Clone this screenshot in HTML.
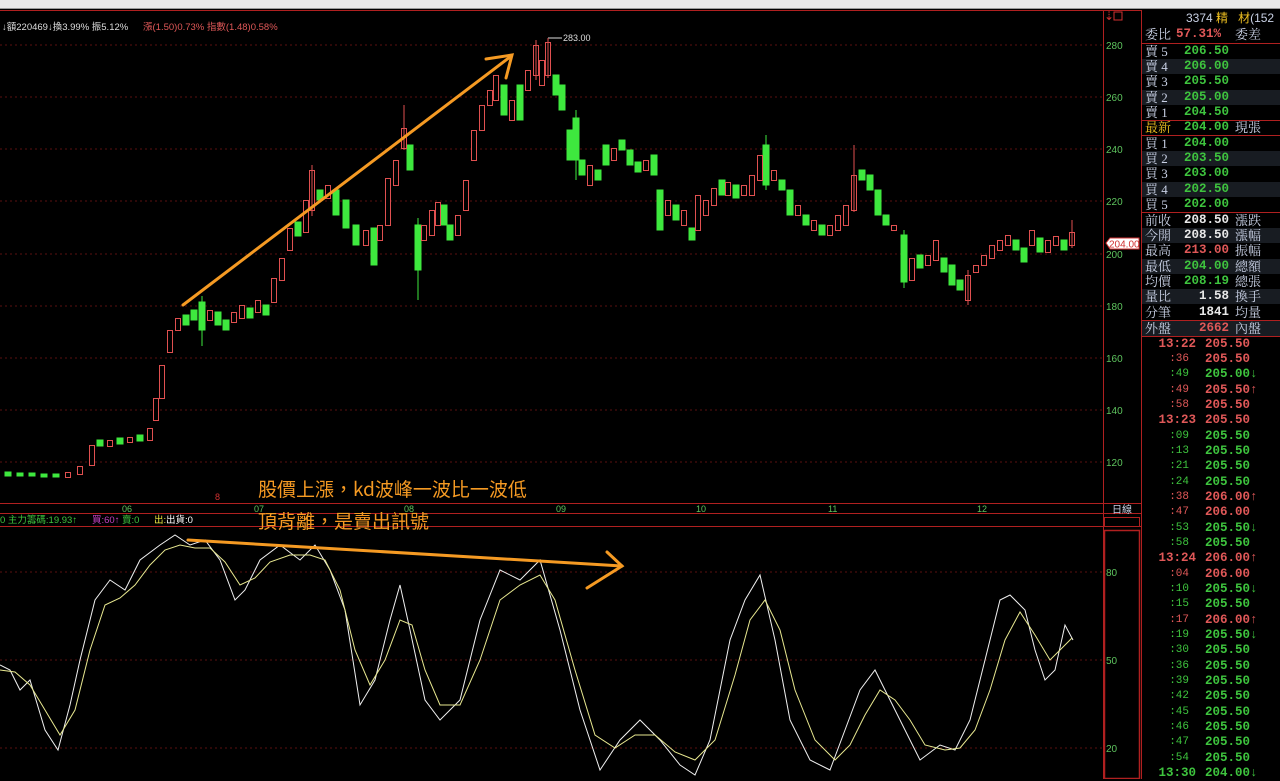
<!DOCTYPE html>
<html><head><meta charset="utf-8">
<style>
*{margin:0;padding:0;box-sizing:border-box}
body{width:1280px;height:779px;background:#000;overflow:hidden;position:relative;font-family:"Liberation Sans","Noto Sans CJK TC",sans-serif}
#topbar{position:absolute;left:0;top:0;width:1280px;height:9px;background:#e8e8e8;border-bottom:1px solid #999}
svg{position:absolute;left:0;top:0}
#panel{position:absolute;left:1141px;top:10px;width:139px;height:769px;background:#000;border-left:1px solid #b02020;font-family:"Liberation Serif","Noto Serif CJK SC","Noto Sans CJK TC",serif}
.r{position:absolute;left:0;width:139px;height:15.3px;font-size:13px;line-height:15px;color:#c8d0e4}
.r.alt{background:#181c22}
.r .l{position:absolute;left:3px}
.r .v{position:absolute;right:52px;font-family:"Liberation Mono",monospace;font-weight:bold;font-size:12.5px}
.r .e{position:absolute;left:93px}
.t{position:absolute;left:0;width:139px;height:15.3px;font-family:"Liberation Mono",monospace;font-size:12.5px;line-height:15px;font-weight:bold}
.t .tm{position:absolute;right:92px;font-weight:normal;font-size:11px}
.t .tm.big{font-weight:bold;font-size:12.5px;right:85px}
.t .p{position:absolute;left:63px}
.g{color:#3ec43e}.rd{color:#e05858}.w{color:#e8e8e8}.y{color:#f0c020}
.hl{position:absolute;left:0;width:139px;height:1px;background:#b02020}
</style></head><body>
<div id="topbar"></div>
<svg width="1280" height="779" viewBox="0 0 1280 779">
<g stroke="#5a1010" stroke-dasharray="2,3" stroke-width="1">
<line x1="0" y1="45" x2="1103" y2="45"/><line x1="0" y1="97" x2="1103" y2="97"/><line x1="0" y1="149" x2="1103" y2="149"/><line x1="0" y1="201" x2="1103" y2="201"/><line x1="0" y1="254" x2="1103" y2="254"/><line x1="0" y1="306" x2="1103" y2="306"/><line x1="0" y1="358" x2="1103" y2="358"/><line x1="0" y1="410" x2="1103" y2="410"/><line x1="0" y1="462" x2="1103" y2="462"/>
<line x1="0" y1="572" x2="1103" y2="572"/><line x1="0" y1="660" x2="1103" y2="660"/><line x1="0" y1="748" x2="1103" y2="748"/>
</g>
<g stroke="#b02020" stroke-width="1" fill="none">
<line x1="0" y1="10.5" x2="1141" y2="10.5"/>
<line x1="1103.5" y1="10" x2="1103.5" y2="779"/>
<line x1="0" y1="503.5" x2="1141" y2="503.5"/>
<line x1="0" y1="513.5" x2="1141" y2="513.5"/>
<line x1="0" y1="526.5" x2="1141" y2="526.5"/>
<rect x="1104.5" y="517.5" width="35" height="9"/>
<rect x="1104.5" y="530.5" width="35" height="248" stroke-width="1.5"/>
</g>
<g fill="#5ec45e" font-size="10" font-family="Liberation Sans,sans-serif">
<text x="1106" y="49">280</text><text x="1106" y="101">260</text><text x="1106" y="153">240</text><text x="1106" y="205">220</text><text x="1106" y="258">200</text><text x="1106" y="310">180</text><text x="1106" y="362">160</text><text x="1106" y="414">140</text><text x="1106" y="466">120</text>
<text x="1106" y="576">80</text><text x="1106" y="664">50</text><text x="1106" y="752">20</text>
<text x="122" y="512" font-size="9">06</text><text x="254" y="512" font-size="9">07</text><text x="404" y="512" font-size="9">08</text><text x="556" y="512" font-size="9">09</text><text x="696" y="512" font-size="9">10</text><text x="828" y="512" font-size="9">11</text><text x="977" y="512" font-size="9">12</text>
</g>
<text x="1112" y="513" fill="#c8d0e4" font-size="10" font-family="Noto Sans CJK TC,sans-serif">日線</text>
<path d="M1106 243 L1110 238 L1139 238 L1139 249 L1110 249 Z" fill="#fff" stroke="#d03030"/>
<text x="1109" y="247.5" fill="#d03030" font-size="10" font-family="Liberation Sans,sans-serif">204.00</text>
<text x="1104" y="20" fill="#d03030" font-size="12">⇣</text><rect x="1114" y="12" width="8" height="8" fill="none" stroke="#d03030"/>
<text x="563" y="41" fill="#ddd" font-size="9" font-family="Liberation Sans,sans-serif">283.00</text>
<line x1="548" y1="38" x2="562" y2="38" stroke="#ddd"/>
<text x="215" y="500" fill="#d03030" font-size="9">8</text>
<g font-size="9.5" font-family="Liberation Sans,Noto Sans CJK TC,sans-serif">
<text x="2" y="30" fill="#ddd">↓額220469↓換3.99% 振5.12%</text>
<text x="143" y="30" fill="#e05858">漲(1.50)0.73% 指數(1.48)0.58%</text>
<text x="0" y="523" fill="#3ec43e">0 主力籌碼:19.93↑</text>
<text x="92" y="523" fill="#c040c0">買:60↑</text>
<text x="122" y="523" fill="#3ec43e">賣:0</text>
<text x="154" y="523" fill="#e8e840">出:</text><text x="166" y="523" fill="#fff">出貨:0</text>
</g>
<g id="candles" stroke-width="1">
<g fill="#3ee83e" stroke="#3ee83e">
<rect x="5" y="472" width="6" height="4"/><rect x="17" y="473" width="6" height="3"/><rect x="29" y="473" width="6" height="3"/><rect x="41" y="474" width="6" height="3"/><rect x="53" y="474" width="6" height="3"/>
<rect x="97" y="440" width="6" height="6"/><rect x="117" y="438" width="6" height="6"/><rect x="137" y="435" width="6" height="6"/>
<rect x="183" y="315" width="6" height="10"/><rect x="191" y="310" width="6" height="10"/><rect x="199" y="302" width="6" height="28"/><rect x="215" y="312" width="6" height="13"/><rect x="223" y="320" width="6" height="10"/><rect x="247" y="308" width="6" height="10"/><rect x="263" y="305" width="6" height="10"/>
<rect x="295" y="222" width="6" height="14"/><rect x="317" y="190" width="6" height="10"/><rect x="333" y="190" width="6" height="25"/><rect x="343" y="200" width="6" height="28"/><rect x="353" y="225" width="6" height="20"/><rect x="371" y="228" width="6" height="37"/>
<rect x="407" y="145" width="6" height="25"/><rect x="415" y="225" width="6" height="45"/><rect x="441" y="205" width="6" height="20"/><rect x="447" y="225" width="6" height="15"/>
<rect x="501" y="85" width="6" height="30"/><rect x="517" y="85" width="6" height="35"/><rect x="553" y="75" width="6" height="20"/><rect x="559" y="85" width="6" height="25"/><rect x="567" y="130" width="6" height="30"/><rect x="573" y="118" width="6" height="42"/><rect x="579" y="160" width="6" height="15"/><rect x="595" y="170" width="6" height="10"/><rect x="603" y="145" width="6" height="20"/><rect x="619" y="140" width="6" height="10"/><rect x="627" y="150" width="6" height="15"/><rect x="635" y="162" width="6" height="10"/><rect x="651" y="155" width="6" height="20"/><rect x="657" y="190" width="6" height="40"/><rect x="673" y="205" width="6" height="15"/><rect x="689" y="228" width="6" height="12"/>
<rect x="719" y="180" width="6" height="15"/><rect x="733" y="185" width="6" height="13"/><rect x="763" y="145" width="6" height="40"/><rect x="779" y="180" width="6" height="10"/><rect x="787" y="190" width="6" height="25"/><rect x="803" y="215" width="6" height="10"/><rect x="819" y="225" width="6" height="10"/>
<rect x="859" y="170" width="6" height="10"/><rect x="867" y="175" width="6" height="15"/><rect x="875" y="190" width="6" height="25"/><rect x="883" y="215" width="6" height="10"/><rect x="901" y="235" width="6" height="47"/><rect x="917" y="255" width="6" height="13"/><rect x="941" y="258" width="6" height="14"/><rect x="949" y="265" width="6" height="20"/><rect x="957" y="280" width="6" height="10"/><rect x="1013" y="240" width="6" height="10"/><rect x="1021" y="248" width="6" height="14"/><rect x="1037" y="238" width="6" height="14"/><rect x="1061" y="240" width="6" height="10"/>
</g>
<g fill="#000" stroke="#e05050">
<rect x="65.5" y="472.5" width="5" height="5"/><rect x="77.5" y="466.5" width="5" height="8"/><rect x="89.5" y="445.5" width="5" height="20"/><rect x="107.5" y="440.5" width="5" height="6"/><rect x="127.5" y="437.5" width="5" height="5"/><rect x="147.5" y="428.5" width="5" height="12"/><rect x="153.5" y="398.5" width="5" height="22"/><rect x="159.5" y="365.5" width="5" height="33"/><rect x="167.5" y="330.5" width="5" height="22"/><rect x="175.5" y="318.5" width="5" height="12"/>
<rect x="207.5" y="310.5" width="5" height="10"/><rect x="231.5" y="312.5" width="5" height="10"/><rect x="239.5" y="305.5" width="5" height="13"/><rect x="255.5" y="300.5" width="5" height="12"/><rect x="271.5" y="278.5" width="5" height="24"/><rect x="279.5" y="258.5" width="5" height="22"/><rect x="287.5" y="228.5" width="5" height="22"/><rect x="303.5" y="200.5" width="5" height="32"/><rect x="309.5" y="170.5" width="5" height="40"/><rect x="325.5" y="185.5" width="5" height="13"/><rect x="363.5" y="230.5" width="5" height="15"/><rect x="377.5" y="225.5" width="5" height="15"/><rect x="385.5" y="178.5" width="5" height="47"/><rect x="393.5" y="160.5" width="5" height="25"/><rect x="401.5" y="128.5" width="5" height="20"/>
<rect x="421.5" y="225.5" width="5" height="15"/><rect x="429.5" y="210.5" width="5" height="25"/><rect x="435.5" y="202.5" width="5" height="23"/><rect x="455.5" y="215.5" width="5" height="20"/><rect x="463.5" y="180.5" width="5" height="30"/><rect x="471.5" y="130.5" width="5" height="30"/><rect x="479.5" y="105.5" width="5" height="25"/><rect x="487.5" y="90.5" width="5" height="15"/><rect x="493.5" y="75.5" width="5" height="25"/><rect x="509.5" y="100.5" width="5" height="20"/><rect x="525.5" y="70.5" width="5" height="20"/><rect x="533.5" y="45.5" width="5" height="30"/><rect x="539.5" y="60.5" width="5" height="25"/><rect x="545.5" y="42.5" width="5" height="33"/>
<rect x="587.5" y="165.5" width="5" height="20"/><rect x="611.5" y="148.5" width="5" height="12"/><rect x="643.5" y="160.5" width="5" height="10"/><rect x="665.5" y="200.5" width="5" height="15"/><rect x="681.5" y="210.5" width="5" height="15"/><rect x="695.5" y="195.5" width="5" height="35"/><rect x="703.5" y="200.5" width="5" height="15"/><rect x="711.5" y="188.5" width="5" height="17"/><rect x="725.5" y="182.5" width="5" height="13"/><rect x="741.5" y="185.5" width="5" height="10"/><rect x="749.5" y="175.5" width="5" height="20"/><rect x="757.5" y="155.5" width="5" height="25"/><rect x="771.5" y="170.5" width="5" height="10"/><rect x="795.5" y="205.5" width="5" height="10"/><rect x="811.5" y="220.5" width="5" height="10"/><rect x="827.5" y="225.5" width="5" height="10"/><rect x="835.5" y="215.5" width="5" height="15"/><rect x="843.5" y="205.5" width="5" height="20"/><rect x="851.5" y="175.5" width="5" height="35"/><rect x="891.5" y="225.5" width="5" height="5"/><rect x="909.5" y="258.5" width="5" height="22"/><rect x="925.5" y="255.5" width="5" height="10"/><rect x="933.5" y="240.5" width="5" height="20"/><rect x="965.5" y="275.5" width="5" height="25"/><rect x="973.5" y="265.5" width="5" height="7"/><rect x="981.5" y="255.5" width="5" height="10"/><rect x="989.5" y="245.5" width="5" height="13"/><rect x="997.5" y="240.5" width="5" height="10"/><rect x="1005.5" y="235.5" width="5" height="10"/><rect x="1029.5" y="230.5" width="5" height="15"/><rect x="1045.5" y="240.5" width="5" height="12"/><rect x="1053.5" y="236.5" width="5" height="9"/><rect x="1069.5" y="232.5" width="5" height="13"/>
</g>
<g stroke="#3ee83e"><line x1="202" y1="296" x2="202" y2="346"/><line x1="418" y1="218" x2="418" y2="300"/><line x1="766" y1="135" x2="766" y2="190"/><line x1="904" y1="230" x2="904" y2="288"/><line x1="576" y1="110" x2="576" y2="180"/></g>
<g stroke="#e05050"><line x1="312" y1="165" x2="312" y2="216"/><line x1="404" y1="105" x2="404" y2="150"/><line x1="548" y1="38" x2="548" y2="78"/><line x1="536" y1="40" x2="536" y2="80"/><line x1="854" y1="145" x2="854" y2="212"/><line x1="1072" y1="220" x2="1072" y2="248"/><line x1="968" y1="270" x2="968" y2="305"/></g>
</g>
<polyline fill="none" stroke="#f0f0f0" stroke-width="1" points="0,665 10,670 20,690 30,680 45,730 58,750 70,705 80,660 95,600 110,580 125,590 140,560 160,545 175,535 190,545 205,540 220,560 235,600 245,590 260,560 280,545 300,560 315,545 330,570 345,610 360,705 375,680 390,620 400,585 410,630 425,700 440,720 460,700 480,620 500,570 520,580 540,560 560,630 580,710 600,770 620,740 640,720 660,740 680,765 695,775 710,740 730,640 745,600 760,575 775,640 790,720 810,760 830,770 845,730 860,690 875,670 890,700 905,730 920,760 940,745 955,750 970,720 985,660 1000,600 1010,595 1025,610 1035,650 1045,680 1055,670 1065,625 1073,640"/>
<polyline fill="none" stroke="#e8e890" stroke-width="1" points="0,670 15,672 30,685 45,710 60,735 75,710 90,650 105,605 120,598 135,585 150,565 165,550 180,545 195,548 210,548 225,562 240,585 255,578 270,562 290,555 310,555 325,560 340,590 355,650 370,685 385,660 400,620 412,625 425,670 440,705 460,705 480,660 500,600 520,585 540,575 555,600 575,670 595,735 615,748 635,735 655,735 675,752 695,760 715,740 735,675 750,620 765,600 780,630 795,690 815,740 835,760 850,745 865,715 880,690 895,700 910,720 925,745 945,750 960,748 975,730 990,690 1005,640 1020,612 1035,635 1050,660 1060,650 1072,638"/>
<g stroke="#f59a23" stroke-width="3" fill="none" stroke-linecap="round">
<line x1="183" y1="305" x2="510" y2="57"/><polyline points="486,59 512,55 506,78"/>
<line x1="188" y1="540" x2="622" y2="566"/><polyline points="607,552 622,566 587,588"/>
</g>
<g fill="#f59a23" font-size="19" font-family="Noto Sans CJK TC,sans-serif">
<text x="258" y="496">股價上漲，kd波峰一波比一波低</text>
<text x="258" y="528">頂背離，是賣出訊號</text>
</g>
</svg>
<div id="panel">
<div class="r" style="top:1px"><span class="l" style="left:44px;font-family:Liberation Sans;font-size:12px">3374 <span class="y">精</span> &nbsp; <span class="y">材</span>(152</span></div>
<div class="r" style="top:17px"><span class="l">委比</span><span class="v rd" style="right:60px">57.31%</span><span class="e">委差</span></div>
<div class="hl" style="top:33px"></div>
<div class="r" style="top:34px"><span class="l">賣 5</span><span class="v g">206.50</span></div>
<div class="r alt" style="top:49px"><span class="l">賣 4</span><span class="v g">206.00</span></div>
<div class="r" style="top:64px"><span class="l">賣 3</span><span class="v g">205.50</span></div>
<div class="r alt" style="top:80px"><span class="l">賣 2</span><span class="v g">205.00</span></div>
<div class="r" style="top:95px"><span class="l">賣 1</span><span class="v g">204.50</span></div>
<div class="hl" style="top:110px"></div>
<div class="r" style="top:110px"><span class="l y">最新</span><span class="v g">204.00</span><span class="e">現張</span></div>
<div class="hl" style="top:125px"></div>
<div class="r" style="top:126px"><span class="l">買 1</span><span class="v g">204.00</span></div>
<div class="r alt" style="top:141px"><span class="l">買 2</span><span class="v g">203.50</span></div>
<div class="r" style="top:156px"><span class="l">買 3</span><span class="v g">203.00</span></div>
<div class="r alt" style="top:172px"><span class="l">買 4</span><span class="v g">202.50</span></div>
<div class="r" style="top:187px"><span class="l">買 5</span><span class="v g">202.00</span></div>
<div class="hl" style="top:202px"></div>
<div class="r" style="top:203px"><span class="l">前收</span><span class="v w">208.50</span><span class="e">漲跌</span></div>
<div class="r alt" style="top:218px"><span class="l">今開</span><span class="v w">208.50</span><span class="e">漲幅</span></div>
<div class="r" style="top:233px"><span class="l">最高</span><span class="v rd">213.00</span><span class="e">振幅</span></div>
<div class="r alt" style="top:249px"><span class="l">最低</span><span class="v g">204.00</span><span class="e">總額</span></div>
<div class="r" style="top:264px"><span class="l">均價</span><span class="v g">208.19</span><span class="e">總張</span></div>
<div class="r alt" style="top:279px"><span class="l">量比</span><span class="v w">1.58</span><span class="e">換手</span></div>
<div class="r" style="top:295px"><span class="l">分筆</span><span class="v w">1841</span><span class="e">均量</span></div>
<div class="hl" style="top:310px"></div>
<div class="r alt" style="top:311px"><span class="l">外盤</span><span class="v rd">2662</span><span class="e">內盤</span></div>
<div class="hl" style="top:326px"></div>
<div class="t rd" style="top:327px"><span class="tm big">13:22</span><span class="p">205.50</span></div>
<div class="t rd" style="top:342px"><span class="tm">:36</span><span class="p">205.50</span></div>
<div class="t g" style="top:357px"><span class="tm">:49</span><span class="p">205.00↓</span></div>
<div class="t rd" style="top:373px"><span class="tm">:49</span><span class="p">205.50↑</span></div>
<div class="t rd" style="top:388px"><span class="tm">:58</span><span class="p">205.50</span></div>
<div class="t rd" style="top:403px"><span class="tm big">13:23</span><span class="p">205.50</span></div>
<div class="t g" style="top:419px"><span class="tm">:09</span><span class="p">205.50</span></div>
<div class="t g" style="top:434px"><span class="tm">:13</span><span class="p">205.50</span></div>
<div class="t g" style="top:449px"><span class="tm">:21</span><span class="p">205.50</span></div>
<div class="t g" style="top:465px"><span class="tm">:24</span><span class="p">205.50</span></div>
<div class="t rd" style="top:480px"><span class="tm">:38</span><span class="p">206.00↑</span></div>
<div class="t rd" style="top:495px"><span class="tm">:47</span><span class="p">206.00</span></div>
<div class="t g" style="top:511px"><span class="tm">:53</span><span class="p">205.50↓</span></div>
<div class="t g" style="top:526px"><span class="tm">:58</span><span class="p">205.50</span></div>
<div class="t rd" style="top:541px"><span class="tm big">13:24</span><span class="p">206.00↑</span></div>
<div class="t rd" style="top:557px"><span class="tm">:04</span><span class="p">206.00</span></div>
<div class="t g" style="top:572px"><span class="tm">:10</span><span class="p">205.50↓</span></div>
<div class="t g" style="top:587px"><span class="tm">:15</span><span class="p">205.50</span></div>
<div class="t rd" style="top:603px"><span class="tm">:17</span><span class="p">206.00↑</span></div>
<div class="t g" style="top:618px"><span class="tm">:19</span><span class="p">205.50↓</span></div>
<div class="t g" style="top:633px"><span class="tm">:30</span><span class="p">205.50</span></div>
<div class="t g" style="top:649px"><span class="tm">:36</span><span class="p">205.50</span></div>
<div class="t g" style="top:664px"><span class="tm">:39</span><span class="p">205.50</span></div>
<div class="t g" style="top:679px"><span class="tm">:42</span><span class="p">205.50</span></div>
<div class="t g" style="top:695px"><span class="tm">:45</span><span class="p">205.50</span></div>
<div class="t g" style="top:710px"><span class="tm">:46</span><span class="p">205.50</span></div>
<div class="t g" style="top:725px"><span class="tm">:47</span><span class="p">205.50</span></div>
<div class="t g" style="top:741px"><span class="tm">:54</span><span class="p">205.50</span></div>
<div class="t g" style="top:756px"><span class="tm big">13:30</span><span class="p">204.00↓</span></div>
</div>
</body></html>
